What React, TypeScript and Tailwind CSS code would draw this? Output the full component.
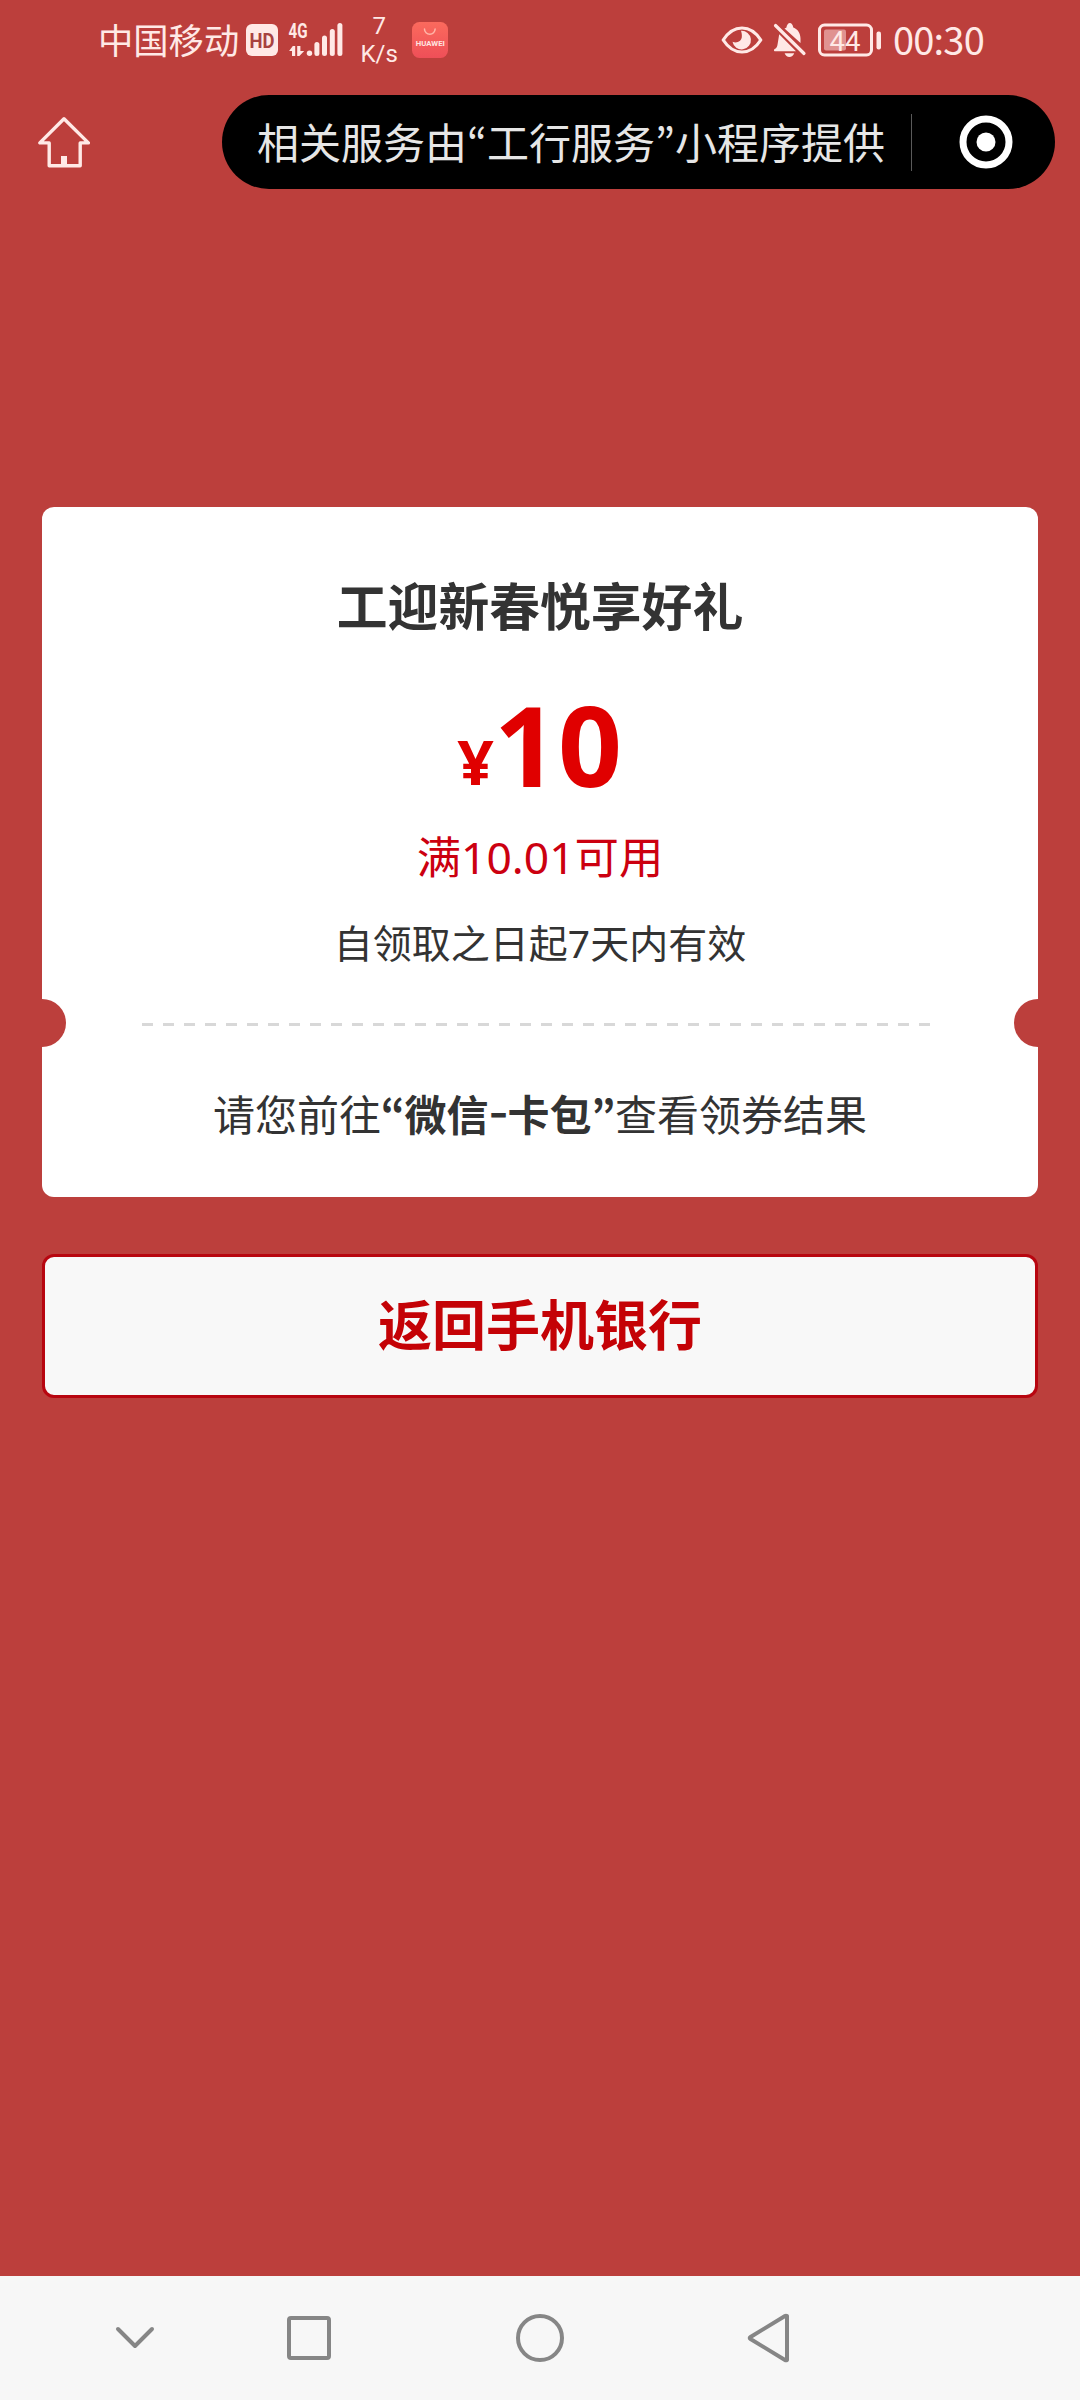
import { clsx } from 'clsx';

const fontStack = "font-['Noto_Sans','Noto_Sans_CJK_SC',sans-serif]";

function SignalIcon() {
  return (
    <svg className="ml-[9px] h-[40px] w-[58px]" viewBox="287 19 58 40" fill="#ffe9e6">
      <text
        x="288.5"
        y="37"
        fontSize="20.5"
        fontWeight="700"
        textLength="19"
        lengthAdjust="spacingAndGlyphs"
        fontFamily="Roboto, sans-serif"
      >
        4G
      </text>
      <path d="M292.8 45h2.4v10h-3.2v-5h-2.9zM297.2 45h3.2v5h3.8l-4.8 5h-2.2z" />
      <circle cx="309.5" cy="52.3" r="2.7" />
      <rect x="314.4" y="41" width="5" height="14" rx="2.5" />
      <rect x="322" y="34.5" width="5" height="20.5" rx="2.5" />
      <rect x="329.8" y="28" width="5" height="27" rx="2.5" />
      <rect x="337.4" y="22" width="5" height="33" rx="2.5" />
    </svg>
  );
}

function HuaweiIcon() {
  return (
    <svg className="h-[36px] w-[36px]" viewBox="0 0 36 36">
      <defs>
        <linearGradient id="huawei" x1="0" y1="0" x2="0" y2="1">
          <stop offset="0" stopColor="#fb6a5d" />
          <stop offset="1" stopColor="#ee4f58" />
        </linearGradient>
      </defs>
      <rect width="36" height="36" rx="7.5" fill="url(#huawei)" />
      <path d="M12.5 7a5.3 5.3 0 0 0 10.6 0" fill="none" stroke="#ffb5a8" strokeWidth="1.5" strokeLinecap="round" />
      <text
        x="3.8"
        y="23.6"
        fontSize="6.5"
        fontWeight="700"
        fill="#ffe4e0"
        textLength="29"
        lengthAdjust="spacingAndGlyphs"
        fontFamily="Roboto, sans-serif"
      >
        HUAWEI
      </text>
    </svg>
  );
}

function EyeIcon() {
  return (
    <svg className="h-[28px] w-[42px]" viewBox="0 0 42 28">
      <path
        d="M2.2 14C7 6.5 13.5 2 21 2s14 4.5 18.8 12C35 21.5 28.5 26 21 26S7 21.5 2.2 14z"
        fill="none"
        stroke="#ffe9e6"
        strokeWidth="3.2"
        strokeLinejoin="round"
      />
      <path d="M20 4.8a9.3 9.3 0 1 1-8.5 11c4.5 1.8 8.8-.6 9.3-4.6.3-2.6-.2-4.6-.8-6.4z" fill="#ffe9e6" />
    </svg>
  );
}

function BellOffIcon() {
  return (
    <svg className="ml-[10px] h-[36px] w-[34px]" viewBox="773 22 34 36" fill="#ffe9e6">
      <path d="M784.5 28.5l1.8-.8c.5-2.8 2-4.7 3.5-4.7 1.8 0 2.9 1.7 3.5 4.4 4.5 1.6 7.2 6 7.2 11.1v4.5z" />
      <path d="M779.2 34.2L796 51.3h-21.3c-1 0-1-1.7 0-2.2 2-1.2 2.6-2.5 3-5.6z" />
      <path d="M784.6 53.3h9.6c-.8 2.3-2.6 3.7-4.8 3.7s-4-1.4-4.8-3.7z" />
      <path d="M775.5 25.5l28.5 28" stroke="#ffe9e6" strokeWidth="3.2" strokeLinecap="round" />
    </svg>
  );
}

function BatteryIcon() {
  return (
    <svg className="ml-[11px] h-[34px] w-[64px]" viewBox="818 22.5 64 34">
      <rect x="819.5" y="24.5" width="52" height="30" rx="5" fill="none" stroke="#ffe9e6" strokeWidth="3" />
      <rect x="824" y="29" width="22" height="21" rx="2" fill="#e09290" />
      <text
        x="829.5"
        y="50"
        fontSize="28"
        fill="#ffe9e6"
        textLength="31"
        lengthAdjust="spacingAndGlyphs"
        fontFamily="Roboto, sans-serif"
      >
        44
      </text>
      <rect x="876.5" y="31" width="4.5" height="18" rx="2" fill="#ffe9e6" />
    </svg>
  );
}

function StatusBar() {
  return (
    <div className="flex h-[80px] items-center justify-between pr-[95px] pl-[98px] text-[#ffe9e6]">
      <div className="flex h-full items-center">
        <span className="text-[35.3px] leading-[40px]">中国移动</span>
        <svg className="ml-[7px] h-[32px] w-[32px]" viewBox="0 0 32 32">
          <rect width="32" height="32" rx="6" fill="#ffe9e6" />
          <text
            x="3.5"
            y="24"
            fontSize="21"
            fontWeight="700"
            fill="#a8423f"
            textLength="25"
            lengthAdjust="spacingAndGlyphs"
            fontFamily="Roboto, sans-serif"
          >
            HD
          </text>
        </svg>
        <SignalIcon />
        <div className="ml-[10px] flex w-[48px] flex-col items-center font-[Roboto,sans-serif] text-[24px] leading-[28px]">
          <span>7</span>
          <span>K/s</span>
        </div>
        <div className="ml-[9px]">
          <HuaweiIcon />
        </div>
      </div>
      <div className="flex h-full items-center">
        <EyeIcon />
        <BellOffIcon />
        <BatteryIcon />
        <span className="mb-[2px] ml-[11px] w-[92px] text-[38px] leading-[40px] tracking-[-0.8px] whitespace-nowrap font-['Noto_Sans_CJK_SC',sans-serif]">
          00:30
        </span>
      </div>
    </div>
  );
}

// Quotes and dashes get a fixed advance so they sit evenly between Chinese glyphs
function Mark({ children, className }: { children: string; className: string }) {
  return (
    <span lang="ko" className={clsx("inline-flex justify-center font-['Noto_Sans_CJK_KR',sans-serif]", className)}>
      {children}
    </span>
  );
}

function TitleBar() {
  return (
    <div className="mt-[15px] flex h-[94px] items-center justify-between pr-[25px] pl-[37px]">
      <svg className="h-[54px] w-[54px]" viewBox="37 115 54 54" fill="none" stroke="#ffe9e6" strokeWidth="3.4">
        <path d="M64 118.8L39.8 142.9h9.4v22.8h31v-22.8h8.2z" strokeLinejoin="round" />
        <path d="M64 156v9" strokeWidth="6" />
      </svg>
      <div className="flex h-[94px] w-[833px] items-center rounded-full bg-black pl-[35px]">
        <span className="w-[654px] text-[42px] leading-[60px] whitespace-nowrap text-[#e6e6e6]">
          相关服务由<Mark className="w-[20px]">“</Mark>工行服务<Mark className="w-[20px]">”</Mark>小程序提供
        </span>
        <div className="h-[57px] w-px bg-[#5a5a5a]" />
        <svg className="ml-[47px] h-[54px] w-[54px]" viewBox="0 0 54 54">
          <circle cx="27" cy="27" r="23" fill="none" stroke="#fff" strokeWidth="7" />
          <circle cx="27" cy="27" r="9.5" fill="#fff" />
        </svg>
      </div>
    </div>
  );
}

function Notch({ side }: { side: 'left' | 'right' }) {
  return (
    <div className={clsx('h-[48px] w-[24px] bg-[#bc3f3c]', side === 'left' ? 'rounded-r-full' : 'rounded-l-full')} />
  );
}

function Coupon() {
  return (
    <div className="flex h-[690px] flex-col items-center rounded-[12px] bg-white text-[#333]">
      <h1 className="mt-[64px] text-[50.8px] leading-[72px] font-bold">工迎新春悦享好礼</h1>
      <div className="mt-[41px] flex h-[120px] items-baseline font-bold text-[#e00000]">
        <span className="-translate-y-[2px] scale-x-105 text-[61px] leading-[120px]">¥</span>
        <span className="ml-px text-[112px] leading-[120px]">10</span>
      </div>
      <p className="mt-[23px] text-[44.4px] leading-[60px] text-[#cc0010]">满10.01可用</p>
      <p className="mt-[28px] text-[39px] leading-[56px]">自领取之日起7天内有效</p>
      <div className="mt-[28px] flex w-full items-center justify-between">
        <Notch side="left" />
        <div className="mt-[3px] mr-[8px] h-[3px] w-[788px] bg-[repeating-linear-gradient(90deg,#d8d8d8_0_11px,transparent_11px_21px)]" />
        <Notch side="right" />
      </div>
      <p className="mt-[36px] text-[42px] leading-[60px] whitespace-nowrap">
        请您前往
        <b>
          <Mark className="w-[23.5px]">“</Mark>微信<Mark className="w-[19px] scale-x-125">-</Mark>卡包
          <Mark className="w-[23.5px]">”</Mark>
        </b>
        查看领券结果
      </p>
    </div>
  );
}

function NavBar() {
  return (
    <nav className="flex h-[124px] items-center bg-[#f7f7f7] pl-[114px]">
      <svg className="h-[52px] w-[42px]" viewBox="114 2312 42 52" fill="none" stroke="#868686" strokeWidth="4">
        <path d="M118 2329l17 17 17-17" strokeLinecap="round" strokeLinejoin="round" />
      </svg>
      <svg className="ml-[127px] h-[52px] w-[52px]" viewBox="283 2312 52 52" fill="none" stroke="#868686" strokeWidth="4">
        <rect x="289" y="2318" width="40" height="40" rx="2" />
      </svg>
      <svg className="ml-[179px] h-[52px] w-[52px]" viewBox="514 2312 52 52" fill="none" stroke="#868686" strokeWidth="4">
        <circle cx="540" cy="2338" r="22" />
      </svg>
      <svg className="ml-[177px] h-[52px] w-[52px]" viewBox="743 2312 52 52" fill="none" stroke="#868686" strokeWidth="4">
        <path d="M787 2316v44q-1 .6-2 0l-34.5-21q-1.6-1 0-2l34.5-21q1-.6 2 0z" strokeLinejoin="round" />
      </svg>
    </nav>
  );
}

export default function App() {
  return (
    <div lang="zh-CN" className={clsx('flex h-[2400px] w-[1080px] flex-col overflow-hidden bg-[#bc3f3c]', fontStack)}>
      <StatusBar />
      <TitleBar />
      <main className="mt-[318px] flex-1 px-[42px]">
        <Coupon />
        <button
          type="button"
          className="mt-[57px] flex h-[144px] w-full items-center justify-center rounded-[12px] border-[3px] border-[#b80610] bg-[#f8f8f8] pb-[2px] text-[54px] leading-[72px] font-bold text-[#c40206]"
        >
          返回手机银行
        </button>
      </main>
      <NavBar />
    </div>
  );
}
